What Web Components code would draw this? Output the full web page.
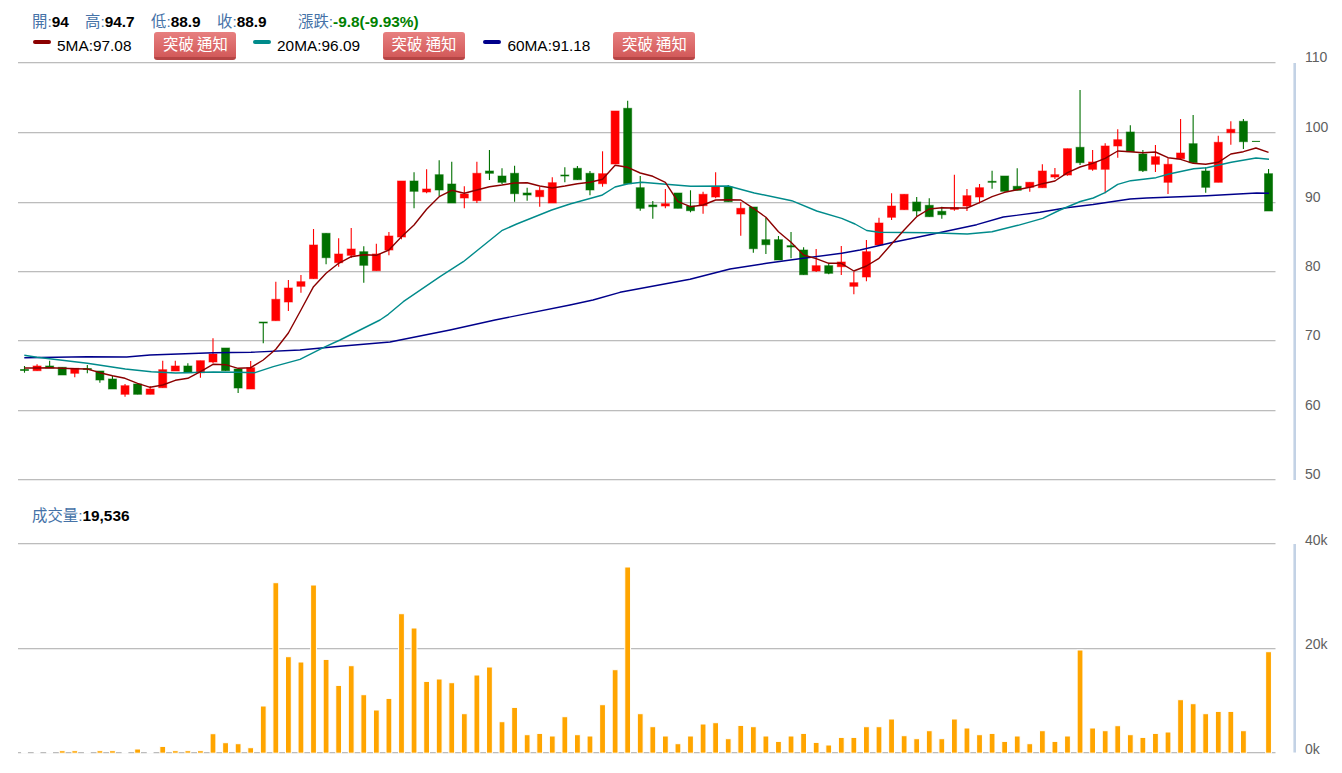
<!DOCTYPE html>
<html lang="zh-Hant">
<head>
<meta charset="utf-8">
<title>K線圖</title>
<style>
  html, body { margin: 0; background: #fff; }
</style>
</head>
<body>
<stock-panel></stock-panel>

<script>
const FONT = `"Liberation Sans", "Noto Sans CJK TC", sans-serif`;
const SVG_NS = "http://www.w3.org/2000/svg";

const X0 = 24.5, DX = 12.566;
const xAt = (i) => X0 + DX * i;

// [wick top, body top, body bottom, wick bottom, colour] in page pixels
const CANDLES = [
  [366,369.5,370.5,372.7,"g"],[364.3,366,370.7,370.7,"r"],[360.7,366,368,368,"g"],[367.3,367.3,375,375,"g"],[368.3,368.3,373.3,377.3,"r"],
  [365,368.5,369.5,373.3,"g"],[371,371,380,382.7,"g"],[376,379,389,389,"g"],[384,385.7,394.3,396.7,"r"],[384,384,394.3,394.3,"g"],
  [386,389,394.3,394.3,"r"],[360.7,369.7,387.7,387.7,"r"],[360.7,366,371,371,"r"],[363.3,366,372.7,372.7,"g"],[360.7,360.7,372.7,377.7,"r"],
  [338.3,354,362,363.3,"r"],[348,348,370.7,370.7,"g"],[369,369,388,393,"g"],[361,367.7,389,389,"r"],[322.3,322,323,343.3,"g"],
  [281.7,299.3,320.7,320.7,"r"],[280,288,302,311,"r"],[275,281.7,286.3,292.7,"r"],[229,245,278.7,278.7,"r"],[233.3,233.3,257.7,264.3,"g"],
  [238.3,254,262.7,266.7,"r"],[228,249,255.3,258,"r"],[246.3,251.7,265.3,282.7,"g"],[243.7,254,270.7,270.7,"r"],[232,236,250,255.3,"r"],
  [181,181,237,239.3,"r"],[172.3,181,191.3,208.3,"g"],[169.3,189,192,193.3,"r"],[160.3,174.7,190,196,"g"],[161.7,184,203,203,"g"],
  [186.3,194,198,208.3,"r"],[161.7,173.3,200.7,203,"r"],[150,171,173.3,180,"g"],[168.3,176,182.3,184.3,"g"],[165.7,173.3,193.7,201.7,"g"],
  [187.7,193,195,200.7,"g"],[186.7,190.3,196.7,206.7,"r"],[177.3,182.7,203,203,"r"],[167.3,175,176,182.3,"g"],[166,168.3,179.7,179.7,"g"],
  [171,173.3,190,195.3,"g"],[151.3,173.7,183.7,186.7,"r"],[111,111,164,164,"r"],[100.7,108.3,183.7,183.7,"g"],[176,187.7,208.3,210.7,"g"],
  [201,205,206.7,218.7,"g"],[189,203.7,206,208.3,"r"],[193,193,208.3,208.3,"g"],[190.3,206,210.7,212.3,"g"],[191.7,194.3,205.7,213.7,"r"],
  [172.3,187,197,198.3,"r"],[185,187,201.7,201.7,"g"],[202.3,208.3,214,235.7,"r"],[207,207,248.7,252.7,"g"],[217.7,239.7,244.7,254,"g"],
  [236,239.7,260,260,"g"],[232,245.7,247,258.3,"g"],[247.3,250,274.7,274.7,"g"],[249,265.7,271,272,"r"],[262.7,265.7,273.3,274.3,"g"],
  [246,262,266.7,275,"r"],[271.7,282.7,286.3,294.3,"r"],[240,251.7,277,281.3,"r"],[217.7,223,245,245,"r"],[193.3,206,217.3,220,"r"],
  [194.3,194.3,209.7,209.7,"r"],[197,202,211,216,"g"],[198.3,205.3,216.7,216.7,"g"],[206.7,211.3,214.7,218.7,"g"],[174.7,207.7,209.3,210.7,"r"],
  [189,195.7,206,211,"r"],[184,187.7,197,203.3,"r"],[170.7,181.3,182.3,188.7,"g"],[176,176,191.3,191.3,"g"],[168.3,186.3,190.3,190.3,"g"],
  [182.3,182.3,187.3,191.7,"r"],[164.3,171,187.7,187.7,"r"],[168,174.7,177,179,"r"],[148.7,148.7,175,175.7,"r"],[90,147.3,162.7,165,"g"],
  [150,162,169.3,170.7,"r"],[143.3,146,169.3,193.3,"r"],[129.3,139.7,146,157.7,"r"],[125.3,132,151.7,151.7,"g"],[150,154,170.7,172,"g"],
  [145,156.7,164.3,172,"r"],[158.3,164.3,182.3,194,"r"],[119,153,158.7,158.7,"r"],[115,143.7,162.7,162.7,"g"],[167.3,171,187.3,192.7,"g"],
  [135.7,142.3,182.3,182.3,"r"],[121.3,129.3,132.7,144.7,"r"],[119,121.3,141.7,149,"g"],[141,141,141.8,141.8,"g"],[169,173.7,211,211,"g"],
];

const MA5 = [
  368,368,367.7,368.3,368.7,369,372.7,375.7,378.3,383.3,
  387.3,385,380.3,378.3,371.7,364.3,364.7,368.3,367.7,360,
  349.3,333,310,286.7,273.3,263.3,256.7,254.7,255.3,250,
  236.7,225,209.3,196.7,190.3,193.3,190,186.7,185,183,
  182.7,186,188,186,183.7,182.3,179.3,165.3,167.3,173,
  176.3,182.3,201.7,206.7,205,200,199.7,200,208.3,217.3,
  231.7,242.3,255,258.7,263.3,263.3,271,266,258.3,244,
  230,216.7,209,207.7,208,208,202.7,196.7,192.3,189.7,
  187.3,183.7,181,172.7,167,163.3,158.3,151,151.7,152.7,
  152,157.7,159.3,163.3,164.3,162.3,154,151.7,148,152.3,
].map((y, i) => [xAt(i), y]);

const MA20 = [
  [24.3,355.3],[37,357.3],[87.3,363.3],[125.3,369],[151.3,371.7],[175.7,373],[213.3,372],[238.3,372.3],[255,372.7],
  [273.3,366.7],[300,359.3],[323.3,347.7],[340,340],[380,320],[388.3,314.3],[403.3,301.7],[440,276.7],[463.3,261.7],
  [480,248.3],[501.7,230.7],[516.7,224],[551.7,210],[570,204],[601.7,195.3],[615,187],[628.3,183.7],[641.7,182.3],
  [666,184.3],[690.7,186.3],[728.3,186],[754.3,193],[791.7,200.7],[816.7,211],[841.7,218.3],[855,224],[866.7,230.5],
  [879,232.3],[929.7,232.7],[967.3,234],[992,231.7],[1018,225.3],[1042.7,218.3],[1060,210],[1080.3,201.5],[1093.3,198],
  [1105,192.7],[1117.7,184.3],[1130.7,180.7],[1156,177.7],[1169,174],[1193.7,168.7],[1206.7,167.7],[1231.3,162.3],
  [1256,158],[1269,159.3],
];

const MA60 = [
  [24.3,357.7],[87.3,356.7],[126.7,357],[150,355],[213.3,352.7],[251,352.3],[300,350],[340,346.3],[390,342],[450,330],
  [495,320],[570,305],[593,300],[620,292.3],[690,279.3],[730,269],[766.7,263.3],[803.3,258.3],[841.7,253.3],[860,250],
  [893.3,242.3],[936.7,233.3],[976.7,224.7],[1003.3,217],[1040,212.3],[1066.7,207.7],[1093,204.5],[1130,199],
  [1146.7,198],[1206.7,195.7],[1256.7,193],[1269,193.3],
];

// top of each volume bar in page pixels, 0 = no volume but still a gap in the baseline, null = nothing drawn
const VOLUME_TOPS = [
  0,0,0,751,751,0,751,751,0,749.3,
  0,746.7,751,751,751,734,743,744,748,706.3,
  583,657,662.3,585.3,659.7,685.7,666,695,710.3,698.7,
  614,628.3,681.7,679.3,683,714,675.3,667.3,722,707.7,
  735,733.7,736.3,717,735,736.3,705,670,567.3,714,
  727,736.3,744,736.3,724.3,723,739,725.7,727,736.3,
  741.7,736.3,733.7,742.7,745.3,737.7,737.7,727,727,719.3,
  736,739,731,739,719.3,728.3,735,733.7,741.7,736.3,
  744,731,741.7,736.3,650.3,728.3,731,726,735,737.7,
  733.7,732.3,700,704,714,711.7,711.7,731,null,652,
];

function el(name, attrs, parent) {
  const node = document.createElementNS(SVG_NS, name);
  for (const k in attrs) node.setAttribute(k, attrs[k]);
  if (parent) parent.appendChild(node);
  return node;
}

function drawAxis(svg, ticks, top, bottom) {
  for (const t of ticks) {
    el("line", { x1: 18, x2: 1275.5, y1: t.y, y2: t.y, stroke: "#bcbcbc" }, svg);
    el("line", { x1: 18, x2: 1275.5, y1: t.y + 1, y2: t.y + 1, stroke: "#ececec" }, svg);
  }
  el("rect", { x: 1293.4, y: top, width: 2.6, height: bottom - top, fill: "#c3d2e5" }, svg);
  for (const t of ticks) {
    const label = el("text", { x: 1305, y: t.base, fill: "#606060", "font-size": 14, "font-family": FONT }, svg);
    label.textContent = t.label;
  }
}

const quoteTemplate = document.createElement("template");
quoteTemplate.innerHTML = `
  <style>
    :host { display: flex; align-items: center; height: 18px; font: 15.4px/18px ${FONT}; color: #000; white-space: nowrap; }
    .k { color: #4572a7; }
    ::slotted(:not([slot])) { font-weight: bold; }
  </style>
  <span class="k"><slot name="label"></slot>:</span><slot></slot>
`;
class QuoteItem extends HTMLElement {
  constructor() {
    super();
    this.attachShadow({ mode: "open" });
    this.shadowRoot.appendChild(quoteTemplate.content.cloneNode(true));
  }
}
customElements.define("quote-item", QuoteItem);

const btnTemplate = document.createElement("template");
btnTemplate.innerHTML = `
  <style>
    :host {
      display: flex; align-items: center; justify-content: center; box-sizing: border-box;
      width: 82px; height: 28px; padding-bottom: 3px; border-radius: 3px;
      background: linear-gradient(#e77f7f, #d35a5a 88%, #b54545 89%);
      color: #fff; font: 15.4px/18px ${FONT}; word-spacing: -1px; white-space: nowrap;
    }
  </style>
  <slot></slot>
`;
class NotifyButton extends HTMLElement {
  constructor() {
    super();
    this.attachShadow({ mode: "open" });
    this.shadowRoot.appendChild(btnTemplate.content.cloneNode(true));
  }
}
customElements.define("notify-button", NotifyButton);

const maTemplate = document.createElement("template");
maTemplate.innerHTML = `
  <style>
    :host { display: flex; align-items: center; font: 15.4px/18px ${FONT}; color: #000; white-space: nowrap; }
    i { display: block; width: 18px; height: 4px; border-radius: 2px; margin: -8px 6px 0 0; background: var(--ma-color); }
    notify-button { margin-left: 23px; }
  </style>
  <i></i><slot></slot><notify-button>突破 通知</notify-button>
`;
class MaLegend extends HTMLElement {
  constructor() {
    super();
    this.attachShadow({ mode: "open" });
    this.shadowRoot.appendChild(maTemplate.content.cloneNode(true));
  }
  static get observedAttributes() {
    return ["color"];
  }
  attributeChangedCallback(attrName, oldValue, newValue) {
    this.style.setProperty("--ma-color", newValue);
  }
}
customElements.define("ma-legend", MaLegend);

const headTemplate = document.createElement("template");
headTemplate.innerHTML = `
  <style>
    :host { display: block; box-sizing: border-box; height: 61px; padding: 13px 0 0 32px; }
    .quote { display: flex; height: 19px; }
    .legend { display: flex; margin-left: 1px; }
    ma-legend:nth-child(2) { margin-left: 16.6px; }
    ma-legend:nth-child(3) { margin-left: 18.4px; }
    quote-item:nth-child(1) { width: 53px; }
    quote-item:nth-child(2) { width: 66px; }
    quote-item:nth-child(3) { width: 66px; }
    quote-item:nth-child(4) { width: 81px; }
    .up { color: #008000; }
  </style>
  <div class="quote">
    <quote-item><span slot="label">開</span><span>94</span></quote-item>
    <quote-item><span slot="label">高</span><span>94.7</span></quote-item>
    <quote-item><span slot="label">低</span><span>88.9</span></quote-item>
    <quote-item><span slot="label">收</span><span>88.9</span></quote-item>
    <quote-item><span slot="label">漲跌</span><span class="up">-9.8(-9.93%)</span></quote-item>
  </div>
  <div class="legend">
    <ma-legend color="#8b0000">5MA:97.08</ma-legend>
    <ma-legend color="#008b8b">20MA:96.09</ma-legend>
    <ma-legend color="#00008b">60MA:91.18</ma-legend>
  </div>
`;
class ChartHead extends HTMLElement {
  constructor() {
    super();
    this.attachShadow({ mode: "open" });
    this.shadowRoot.appendChild(headTemplate.content.cloneNode(true));
  }
}
customElements.define("chart-head", ChartHead);

class CandleChart extends HTMLElement {
  constructor() {
    super();
    this.attachShadow({ mode: "open" });
    this.shadowRoot.innerHTML = `
      <style>
        :host { display: block; height: 439px; }
        svg { display: block; overflow: visible; }
      </style>
      <svg width="1342" height="439" viewBox="0 61 1342 439"></svg>
    `;
  }
  connectedCallback() {
    const svg = this.shadowRoot.querySelector("svg");
    const ys = [62.5, 132.5, 202.5, 271.5, 340.5, 410.5, 479.5];
    const ticks = [110, 100, 90, 80, 70, 60, 50].map((v, i) => ({ y: ys[i], base: ys[i] - 0.5, label: String(v) }));
    drawAxis(svg, ticks, 63, 480);

    CANDLES.forEach((c, i) => {
      const [hi, top, bot, lo, kind] = c;
      const color = kind === "r" ? "#ff0000" : "#007000";
      const x = xAt(i);
      if (i !== 98) el("line", { x1: x, x2: x, y1: hi, y2: lo, stroke: color, "stroke-width": 1.1 }, svg);
      el("rect", {
        x: x - 4, y: top, width: 8, height: Math.max(bot - top, 0.6), fill: color,
        stroke: color, "stroke-opacity": i === 98 ? 1 : 0.55, "stroke-width": i === 98 ? 0.2 : 1,
      }, svg);
    });

    for (const [pts, color] of [[MA60, "#00008b"], [MA20, "#008b8b"], [MA5, "#8b0000"]]) {
      el("polyline", {
        points: pts.map((p) => p.join(",")).join(" "), fill: "none",
        stroke: color, "stroke-width": 1.4, "stroke-linejoin": "round",
      }, svg);
    }
  }
}
customElements.define("candle-chart", CandleChart);

class VolumeChart extends HTMLElement {
  constructor() {
    super();
    this.attachShadow({ mode: "open" });
    this.shadowRoot.innerHTML = `
      <style>
        :host { display: block; height: 243px; }
        svg { display: block; overflow: visible; }
      </style>
      <svg width="1342" height="243" viewBox="0 530 1342 243"></svg>
    `;
  }
  connectedCallback() {
    const svg = this.shadowRoot.querySelector("svg");
    drawAxis(svg, [
      { y: 543.5, base: 544.5, label: "40k" },
      { y: 648.5, base: 648.5, label: "20k" },
      { y: 752.5, base: 753.5, label: "0k" },
    ], 544, 752.5);

    VOLUME_TOPS.forEach((top, i) => {
      if (top === null) return;
      const empty = top === 0;
      const y = empty ? 752 : top - 0.3;
      el("rect", {
        x: xAt(i) - 2.9, y, width: 5.8, height: 753.2 - y, fill: empty ? "#fff" : "#ffa500",
        stroke: "#fff", "stroke-width": 1,
      }, svg);
    });
  }
}
customElements.define("volume-chart", VolumeChart);

const panelTemplate = document.createElement("template");
panelTemplate.innerHTML = `
  <style>
    :host { display: block; width: 1342px; height: 773px; overflow: hidden; background: #fff; }
    .vol { display: flex; align-items: center; height: 30px; padding: 2px 0 0 32px; box-sizing: border-box; }
  </style>
  <chart-head></chart-head>
  <candle-chart></candle-chart>
  <div class="vol">
    <quote-item><span slot="label">成交量</span><span>19,536</span></quote-item>
  </div>
  <volume-chart></volume-chart>
`;
class StockPanel extends HTMLElement {
  constructor() {
    super();
    this.attachShadow({ mode: "open" });
    this.shadowRoot.appendChild(panelTemplate.content.cloneNode(true));
  }
}
customElements.define("stock-panel", StockPanel);
</script>
</body>
</html>
